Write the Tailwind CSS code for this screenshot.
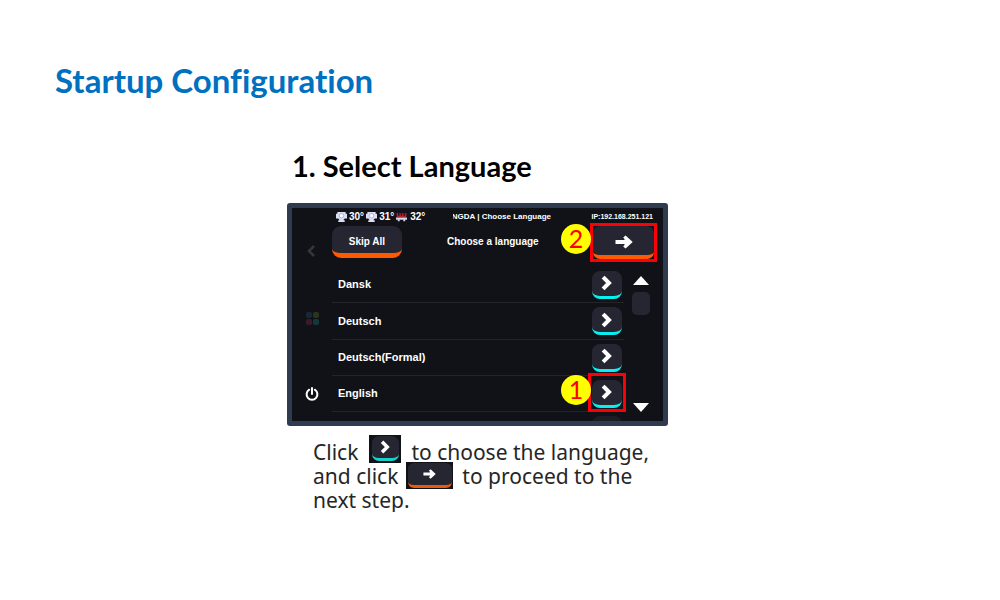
<!DOCTYPE html>
<html lang="en">
<head>
<meta charset="utf-8">
<title>Startup Configuration</title>
<script src="https://cdn.jsdelivr.net/npm/@tailwindcss/browser@4"></script>
</head>
<body class="bg-white text-black font-['Noto_Sans',sans-serif]">
<svg class="hidden" aria-hidden="true">
  <symbol id="chevron" viewBox="0 0 12 16"><path d="M3.500 3.500L8 8l-4.500 4.500" fill="none" stroke="currentColor" stroke-width="4" stroke-linecap="square"/></symbol>
  <symbol id="arrow" viewBox="0 0 18 14"><path d="M.5 5h9V4L8.200 2.600 10.600.4 17.700 7l-7.100 6.600-2.400-2.200L9.500 10V9h-9z" fill="currentColor"/></symbol>
  <symbol id="nozzle" viewBox="0 0 12 12"><path d="M1.500 0h9v2H12v5h-2.500L8 9h1.500v2h-7V9H4L2.500 7H0V2h1.500z" fill="#dcdff5"/><circle cx="6" cy="4" r="2.500" fill="#f8f8ff" stroke="#9397b5" stroke-width=".7"/></symbol>
</svg>
<main class="px-[55px] pt-[60px]">
  <h1 class="font-['Lato',sans-serif] text-[33px] leading-[40px] font-bold text-[#0070c0] [font-variant-ligatures:none]">Startup Configuration</h1>
  <section class="ml-[232px] max-w-[381px] pt-[46px]">
    <h2 class="pl-[5px] font-['Lato',sans-serif] text-[29px] leading-[40px] font-bold">1. Select Language</h2>

    <div class="mt-[17px] rounded-[3px] border-[5px] border-[#2f3b4e] bg-[#111218] font-['Liberation_Sans',sans-serif] font-bold text-white">
      <div class="flex h-[15px] items-end pr-[10px] pl-[44px] text-[10px] leading-[12px]">
        <div class="flex w-[117px] items-center gap-[2px]">
          <svg class="size-[11px]"><use href="#nozzle"/></svg><span>30°</span>
          <svg class="size-[11px]"><use href="#nozzle"/></svg><span>31°</span>
          <svg class="mr-[1px] size-[11px]" viewBox="0 0 12 12"><path d="M1.500 5V1M4.500 5V1M7.500 5V1M10.500 5V1M1 5h10" stroke="#b3202f" stroke-width="1.600" fill="none"/><path d="M0 6h12v2.500h-2V10H8V8.500H4V10H2V8.500H0z" fill="#d5d3e6"/></svg><span>32°</span>
        </div>
        <div class="flex w-[98px] justify-end overflow-hidden text-[8px] whitespace-nowrap"><span>NGDA | Choose Language</span></div>
        <div class="ml-auto text-[7px]">IP:192.168.251.121</div>
      </div>

      <div class="flex h-[198px] overflow-hidden">
        <nav class="flex w-[40px] flex-col items-center pt-[21px]" aria-label="Device">
          <button aria-label="Back" class="text-[#35363a]"><svg class="block h-[14px] w-[12px]" viewBox="0 0 12 14"><path d="M8 2L3 7l5 5" fill="none" stroke="currentColor" stroke-width="2.600"/></svg></button>
          <button aria-label="Apps" class="mt-[54px]"><svg class="block size-[13px]" viewBox="0 0 13 13"><rect width="6" height="6" rx="2" fill="#152936"/><rect x="7" width="6" height="6" rx="2" fill="#2b3420"/><rect y="7" width="6" height="6" rx="2" fill="#3a1b29"/><rect x="7" y="7" width="6" height="6" rx="2" fill="#15393b"/></svg></button>
          <button aria-label="Power" class="mt-[62px]"><svg class="block size-[14px]" viewBox="0 0 14 14"><path d="M4.200 2.700a5.400 5.400 0 1 0 5.600 0M7 1v6" fill="none" stroke="white" stroke-width="2" stroke-linecap="round"/></svg></button>
        </nav>

        <div class="min-w-0 flex-1">
          <div class="flex h-[43px] items-start pr-[6px]">
            <button class="mt-[3px] h-[32px] w-[70px] rounded-[9px] border-b-[5px] border-[#ff5a00] bg-[#252632] pt-[3px] text-[10px]">Skip All</button>
            <p class="mt-[13px] ml-[45px] text-[10px] leading-[12px]">Choose a language</p>
            <div class="relative ml-auto border-[3px] border-[#fb0007]">
              <button aria-label="Next" class="flex h-[33px] w-[61px] items-center justify-center rounded-[7px] border-b-[4px] border-[#ff5a00] bg-[#252632] pt-[3px]"><svg class="h-[14px] w-[18px]"><use href="#arrow"/></svg></button>
              <span class="absolute top-[-2px] left-[-32px] flex size-[30px] items-center justify-center rounded-full bg-[#ffff00] font-['Lato',sans-serif] text-[25px] font-normal text-[#fb0007]">2</span>
            </div>
          </div>

          <div class="flex">
            <ul class="min-w-0 flex-1 text-[11px]">
              <li class="flex h-[37px] items-center justify-between border-b border-[#23252b] pt-[1px] pr-[2px] pl-[6px]">Dansk
                <button aria-label="Choose Dansk" class="flex h-[28px] w-[30px] items-center justify-center rounded-[8px] border-b-[3px] border-[#08efef] bg-[#252632]"><svg class="h-[16px] w-[12px]"><use href="#chevron"/></svg></button></li>
              <li class="flex h-[37px] items-center justify-between border-b border-[#23252b] pr-[2px] pl-[6px]">Deutsch
                <button aria-label="Choose Deutsch" class="flex h-[28px] w-[30px] items-center justify-center rounded-[8px] border-b-[3px] border-[#08efef] bg-[#252632]"><svg class="h-[16px] w-[12px]"><use href="#chevron"/></svg></button></li>
              <li class="flex h-[36px] items-center justify-between border-b border-[#23252b] pr-[2px] pl-[6px]">Deutsch(Formal)
                <button aria-label="Choose Deutsch (Formal)" class="flex h-[28px] w-[30px] items-center justify-center rounded-[8px] border-b-[3px] border-[#08efef] bg-[#252632]"><svg class="h-[16px] w-[12px]"><use href="#chevron"/></svg></button></li>
              <li class="relative flex h-[36px] items-center justify-between border-b border-[#23252b] pr-[2px] pl-[6px]">English
                <button aria-label="Choose English" class="flex h-[28px] w-[30px] items-center justify-center rounded-[8px] border-b-[3px] border-[#08efef] bg-[#252632]"><svg class="h-[16px] w-[12px]"><use href="#chevron"/></svg></button>
                <span class="absolute top-[-3px] right-[-2px] h-[39px] w-[38px] border-[3px] border-[#fb0007]"></span>
                <span class="absolute top-[-1px] right-[33px] flex size-[30px] items-center justify-center rounded-full bg-[#ffff00] font-['Lato',sans-serif] text-[25px] font-normal text-[#fb0007]">1</span></li>
              <li class="flex h-[36px] justify-end pt-[4px] pr-[2px]"><span class="h-[28px] w-[30px] rounded-[8px] bg-[#1c1d25]"></span></li>
            </ul>
            <div class="flex w-[39px] flex-col items-center pt-[10px] pr-[5px]">
              <button aria-label="Scroll up"><svg class="block h-[9px] w-[16px]" viewBox="0 0 16 9"><path d="M8 0l8 9H0z" fill="white"/></svg></button>
              <span class="mt-[7px] h-[23px] w-[18px] rounded-[5px] bg-[#252632]"></span>
              <button aria-label="Scroll down" class="mt-[88px]"><svg class="block h-[9px] w-[16px]" viewBox="0 0 16 9"><path d="M0 0h16L8 9z" fill="white"/></svg></button>
            </div>
          </div>
        </div>
      </div>
    </div>

    <div class="mt-[14px] pl-[26px] text-[21px] leading-[24px] whitespace-nowrap text-[#262626]">
      <div class="flex">Click<span class="mt-[-5px] mr-[10px] mb-[1px] ml-[11px] flex h-[28px] w-[32px] shrink-0 justify-center bg-[#111218] pt-[1px] text-white"><span class="flex h-[25px] w-[27px] items-center justify-center rounded-[7px] border-b-[3px] border-[#18cfc9] bg-[#252632]"><svg class="h-[14px] w-[11px]"><use href="#chevron"/></svg></span></span>to choose the language,</div>
      <div class="flex">and click<span class="mt-[-2px] mr-[9px] mb-[-1px] ml-[8px] flex h-[27px] w-[47px] shrink-0 justify-center bg-[#111218] pt-[1px] text-white"><span class="flex h-[25px] w-[44px] items-center justify-center rounded-[6px] border-b-[3px] border-[#e85a10] bg-[#252632]"><svg class="h-[10px] w-[13px]"><use href="#arrow"/></svg></span></span>to proceed to the</div>
      <div>next step.</div>
    </div>
  </section>
</main>
</body>
</html>
